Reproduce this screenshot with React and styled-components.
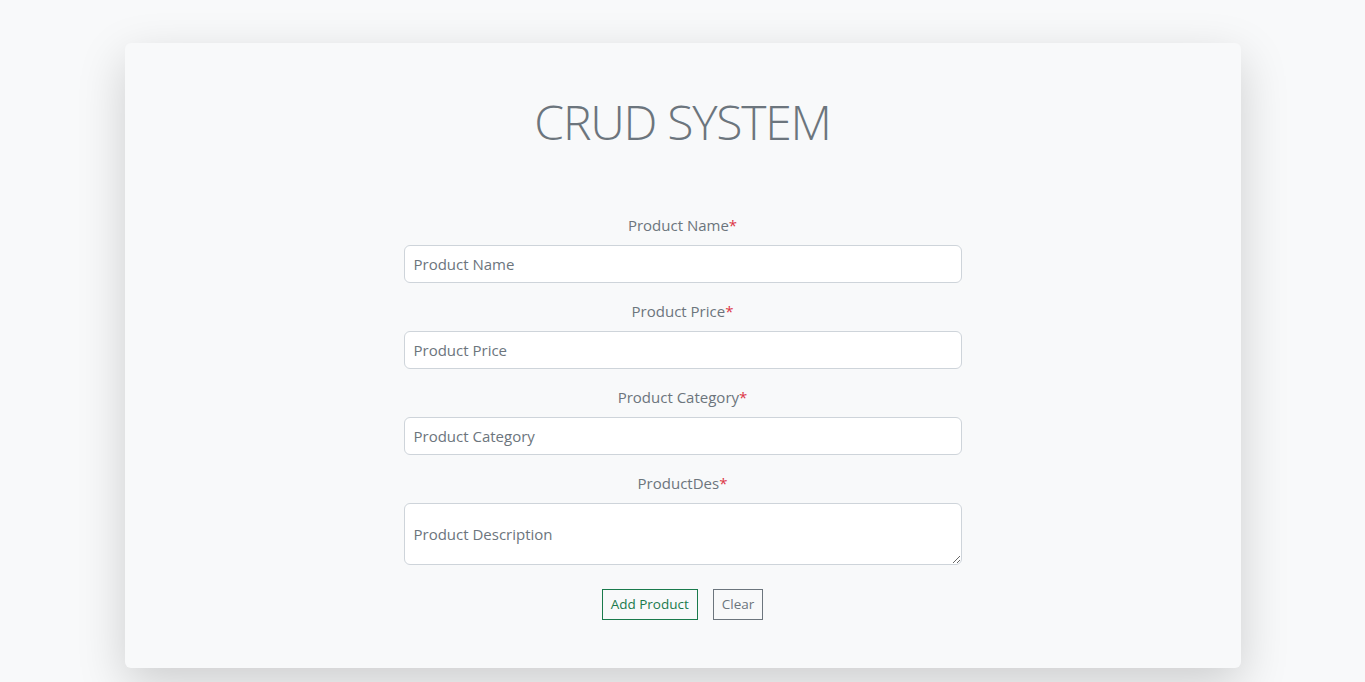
import React from 'react'
import styled, { createGlobalStyle } from 'styled-components'

const GlobalStyle = createGlobalStyle`
    body {
        margin: 0;
        background-color: #f8f9fa;
        font-family: "Open Sans", "Noto Sans", sans-serif;
        color: #6c757d;
    }
`

const Page = styled.div`
    padding: 43px 0 14px;
`

const Card = styled.div`
    width: 1116px;
    margin: 0 auto;
    padding: 48px 0 48px;
    background-color: #f8f9fa;
    border-radius: 6px;
    box-shadow: 0 1rem 3rem rgba(0, 0, 0, 0.175);
    display: flex;
    flex-direction: column;
    align-items: center;
`

const Title = styled.h1`
    margin: 2px 0 62px;
    font-size: 48px;
    font-weight: 300;
    line-height: 1.2;
    color: #6c757d;
    letter-spacing: -1.25px;
`

const Form = styled.form`
    width: 558px;
    display: flex;
    flex-direction: column;
`

const Group = styled.div`
    display: flex;
    flex-direction: column;
    margin-bottom: ${p => (p.last ? '24px' : '16px')};
`

const Label = styled.label`
    text-align: center;
    font-size: 15px;
    line-height: 24px;
    margin-bottom: 8px;
    color: #6c757d;
`

const Star = styled.span`
    color: #dc3545;
`

const Input = styled.input`
    box-sizing: border-box;
    height: 38px;
    padding: 6px 9px;
    font-family: inherit;
    font-size: 15px;
    color: #212529;
    background: #fff;
    border: 1px solid #ced4da;
    border-radius: 6px;
    outline: none;
    &::placeholder {
        color: #6c757d;
    }
`

const TextArea = styled(Input).attrs({ as: 'textarea' })`
    height: 62px;
    padding-top: 20px;
    resize: vertical;
`

const Buttons = styled.div`
    display: flex;
    justify-content: center;
    gap: 15px;
`

const Button = styled.button`
    height: 31px;
    padding: 0 8px;
    font-family: inherit;
    font-size: 13.5px;
    background: transparent;
    border: 1px solid ${p => p.color};
    color: ${p => p.color};
    border-radius: 0;
    cursor: pointer;
`

const fields = [
    { label: 'Product Name', placeholder: 'Product Name' },
    { label: 'Product Price', placeholder: 'Product Price' },
    { label: 'Product Category', placeholder: 'Product Category' },
]

export default function App() {
    return (
        <Page>
            <GlobalStyle />
            <Card>
                <Title>CRUD SYSTEM</Title>
                <Form onSubmit={e => e.preventDefault()}>
                    {fields.map(f => (
                        <Group key={f.label}>
                            <Label>{f.label}<Star>*</Star></Label>
                            <Input placeholder={f.placeholder} />
                        </Group>
                    ))}
                    <Group last>
                        <Label>ProductDes<Star>*</Star></Label>
                        <TextArea placeholder="Product Description" />
                    </Group>
                    <Buttons>
                        <Button color="#1a7a4c">Add Product</Button>
                        <Button color="#6c757d" type="button">Clear</Button>
                    </Buttons>
                </Form>
            </Card>
        </Page>
    )
}
